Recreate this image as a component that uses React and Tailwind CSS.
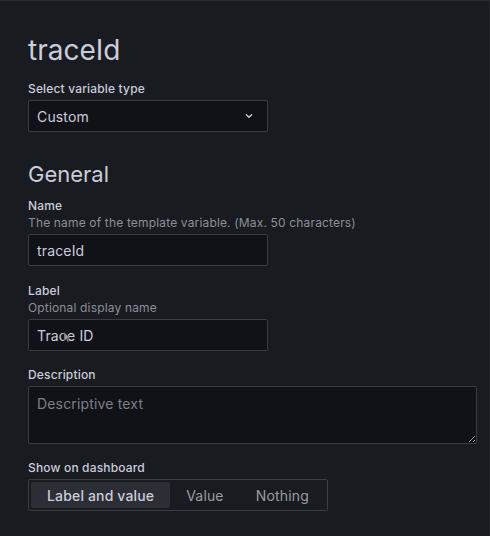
import React from "react";

function Chevron() {
  return (
    <svg width="16" height="16" viewBox="0 0 24 24" fill="none" stroke="#ccccdc" strokeWidth="2" strokeLinecap="round" strokeLinejoin="round">
      <path d="m8 10 4 4 4-4" />
    </svg>
  );
}

function Label({ children, desc }) {
  return (
    <div className={desc ? "mb-[2px]" : "mb-[3px]"}>
      <div className="text-[12px] leading-[16px] font-medium text-[#ccccdc]">{children}</div>
      {desc && <div className="text-[12px] leading-[18px] text-[#8e8e9a]">{desc}</div>}
    </div>
  );
}

export default function App() {
  return (
    <div
      className="w-[490px] h-[536px] bg-[#181b1f] border-t border-t-[#2c2e34] border-r border-r-[#24262c] text-[#ccccdc] overflow-hidden tracking-[0.01em]"
      style={{ fontFamily: "Inter, 'Noto Sans', sans-serif" }}
    >
      <div className="pl-[28px] pt-[29px]">
        <h1 className="text-[28px] leading-[40px] font-normal text-[#ccccdc] mb-[11px] tracking-normal">traceId</h1>

        <Label>Select variable type</Label>
        <div className="w-[240px] h-[32px] bg-[#111217] border border-[#3a3c43] rounded-[2px] flex items-center justify-between pl-[8px] pr-[10px]">
          <span className="text-[14px]">Custom</span>
          <Chevron />
        </div>

        <h2 className="text-[22px] leading-[28px] font-normal mt-[28px] mb-[10px] tracking-normal">General</h2>

        <Label desc="The name of the template variable. (Max. 50 characters)">Name</Label>
        <div className="w-[240px] h-[32px] bg-[#111217] border border-[#3a3c43] rounded-[2px] flex items-center pl-[8px]">
          <span className="text-[14px]">traceId</span>
        </div>

        <div className="mt-[17px]">
          <Label desc="Optional display name">Label</Label>
          <div className="relative w-[240px] h-[32px] bg-[#111217] border border-[#3a3c43] rounded-[2px] flex items-center pl-[8px]">
            <span className="text-[14px]">Trace ID</span>
            <svg className="absolute left-[34px] top-[11px]" width="8" height="12" viewBox="0 0 8 12">
              <path d="M1 1 L1 10 L3.2 8 L4.8 11.2 L6 10.6 L4.5 7.5 L7 7.3 Z" fill="#9a9aa4" stroke="#2a2a2e" strokeWidth="0.6" />
            </svg>
          </div>
        </div>

        <div className="mt-[16px]">
          <Label>Description</Label>
          <textarea
            placeholder="Descriptive text"
            className="block w-[449px] h-[58px] bg-[#111217] border border-[#3a3c43] rounded-[2px] px-[8px] pt-[6px] text-[14px] text-[#ccccdc] placeholder:text-[#7d7f87] outline-none resize-y"
            style={{ colorScheme: "dark" }}
          />
        </div>

        <div className="mt-[16px]">
          <Label>Show on dashboard</Label>
          <div className="inline-flex h-[32px] border border-[#3a3c43] rounded-[2px] p-[2px]">
            <div className="h-full px-[16px] flex items-center bg-[#2b2e34] rounded-[2px] text-[14px] font-medium text-[#ccccdc]">Label and value</div>
            <div className="h-full px-[16px] flex items-center text-[14px] text-[#9a9ba3]">Value</div>
            <div className="h-full px-[16px] flex items-center text-[14px] text-[#9a9ba3]">Nothing</div>
          </div>
        </div>
      </div>
    </div>
  );
}
